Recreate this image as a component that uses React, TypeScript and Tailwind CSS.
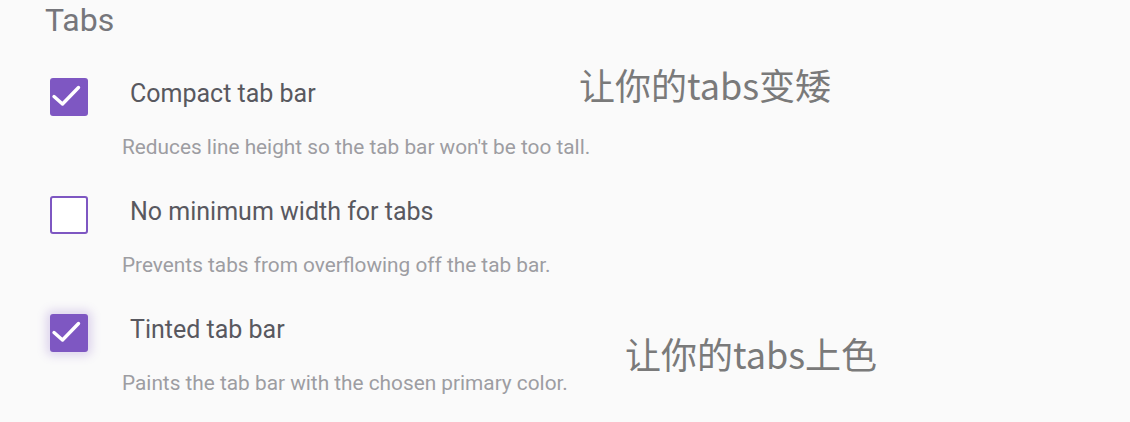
import React, { useState } from 'react';

interface Option {
  id: string;
  label: string;
  hint: string;
  checked: boolean;
  focused?: boolean;
}

const initialOptions: Option[] = [
  {
    id: 'compact',
    label: 'Compact tab bar',
    hint: "Reduces line height so the tab bar won't be too tall.",
    checked: true
  },
  {
    id: 'nominwidth',
    label: 'No minimum width for tabs',
    hint: 'Prevents tabs from overflowing off the tab bar.',
    checked: false
  },
  {
    id: 'tinted',
    label: 'Tinted tab bar',
    hint: 'Paints the tab bar with the chosen primary color.',
    checked: true,
    focused: true
  }
];

const CheckBox: React.FC<{ checked: boolean; focused?: boolean; onToggle: () => void }> = ({
  checked,
  focused,
  onToggle
}) => (
  <button
    type="button"
    onClick={onToggle}
    className={`flex h-[38px] w-[38px] shrink-0 items-center justify-center rounded-[3px] ${
      checked ? 'bg-[#7e57c2]' : 'border-2 border-[#7e57c2] bg-white'
    } ${focused ? 'shadow-[0_0_10px_4px_rgba(126,87,194,0.22)]' : ''}`}
  >
    {checked && (
      <svg width="38" height="38" viewBox="0 0 38 38" fill="none">
        <path d="M4 18.5l8.5 7.5L28.5 9.5" stroke="white" strokeWidth="3.4" strokeLinecap="round" strokeLinejoin="round" />
      </svg>
    )}
  </button>
);

const App: React.FC = () => {
  const [options, setOptions] = useState<Option[]>(initialOptions);

  const toggle = (id: string) =>
    setOptions(options.map((o) => (o.id === id ? { ...o, checked: !o.checked } : o)));

  return (
    <div className="relative h-[422px] w-[1130px] overflow-hidden bg-[#fafafa] pl-[45px] font-['Roboto',sans-serif]">
      <h2 className="text-[32px] leading-[40px] text-[#76767b]">Tabs</h2>

      <div className="mt-[38px] flex flex-col gap-[37px]">
        {options.map((o) => (
          <div key={o.id}>
            <div className="flex items-center pl-[5px]">
              <CheckBox checked={o.checked} focused={o.focused} onToggle={() => toggle(o.id)} />
              <span className="mb-[7px] ml-[42px] text-[25px] leading-[30px] text-[#58585f]">{o.label}</span>
            </div>
            <p className="mt-[19px] pl-[77px] text-[20.8px] leading-[24px] text-[#9d9da2]">{o.hint}</p>
          </div>
        ))}
      </div>

      {/* annotations laid over the screenshot */}
      <span className="absolute left-[579px] top-[63px] font-['Noto_Sans_CJK_SC',sans-serif] text-[36px] leading-[42px] text-[#7a7a7a]">
        让你的tabs变矮
      </span>
      <span className="absolute left-[625px] top-[332px] font-['Noto_Sans_CJK_SC',sans-serif] text-[36px] leading-[42px] text-[#7a7a7a]">
        让你的tabs上色
      </span>
    </div>
  );
};

export default App;
